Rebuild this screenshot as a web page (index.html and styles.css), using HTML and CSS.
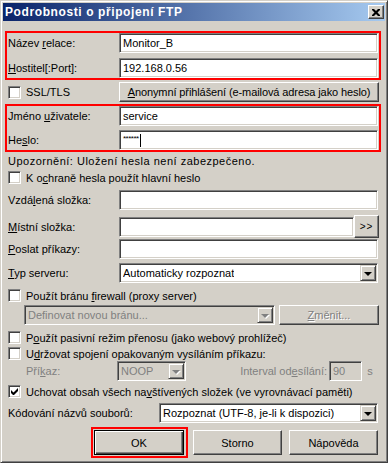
FILE: index.html
```html
<!DOCTYPE html>
<html>
<head>
  <meta charset="utf-8">
  <link rel="stylesheet" href="styles.css">
</head>
<body>

  <div class="window">
    <div class="titlebar">
      <span class="title">Podrobnosti o připojení FTP</span>
      <span class="close">
        <svg width="8" height="7" viewBox="0 0 8 7"><path d="M0 0h2l2 2 2-2h2v1l-2.5 2.5L8 6v1H6L4 5 2 7H0V6l2.5-2.5L0 1z" fill="#000"/></svg>
      </span>
    </div>

    <div class="content">

      <!-- session -->
      <div class="group group-session">
        <div class="row">
          <span class="lbl">Název <u>r</u>elace:</span>
          <div class="edit">Monitor_B</div>
        </div>
        <div class="row">
          <span class="lbl"><u>H</u>ostitel[:Port]:</span>
          <div class="edit">192.168.0.56</div>
        </div>
      </div>

      <div class="row row-ssl">
        <label class="check"><span class="box"></span><span>SSL/TLS</span></label>
        <div class="btn"><span><u>A</u>nonymní přihlášení (e-mailová adresa jako heslo)</span></div>
      </div>

      <!-- login -->
      <div class="group group-login">
        <div class="row">
          <span class="lbl">Jméno <u>u</u>živatele:</span>
          <div class="edit">service</div>
        </div>
        <div class="row">
          <span class="lbl">He<u>s</u>lo:</span>
          <div class="edit"><span class="stars">******</span><span class="caret"></span></div>
        </div>
      </div>

      <div class="note">Upozornění: Uložení hesla není zabezpečeno.</div>

      <label class="check line-master"><span class="box"></span><span>K o<u>c</u>hraně hesla použít hlavní heslo</span></label>

      <div class="row row-remote">
        <span class="lbl">Vzdá<u>l</u>ená složka:</span>
        <div class="edit"></div>
      </div>
      <div class="row row-local">
        <span class="lbl"><u>M</u>ístní složka:</span>
        <div class="local">
          <div class="edit"></div>
          <div class="btn btn-browse">&gt;&gt;</div>
        </div>
      </div>
      <div class="row row-cmd">
        <span class="lbl"><u>P</u>oslat příkazy:</span>
        <div class="edit"></div>
      </div>
      <div class="row row-type">
        <span class="lbl"><u>T</u>yp serveru:</span>
        <div class="edit combo">
          <span class="combo-text">Automaticky rozpoznat</span>
          <span class="drop"><span class="tri"></span></span>
        </div>
      </div>

      <label class="check line-firewall"><span class="box"></span><span>Použít bránu <u>f</u>irewall (proxy server)</span></label>
      <div class="proxy">
        <div class="edit combo disabled">
          <span class="combo-text">Definovat novou bránu...</span>
          <span class="drop"><span class="tri"></span></span>
        </div>
        <div class="btn disabled-btn"><span><u>Z</u>měnit...</span></div>
      </div>

      <label class="check line-passive"><span class="box"></span><span>P<u>o</u>užít pasivní režim přenosu (jako webový prohlížeč)</span></label>
      <label class="check line-keep"><span class="box"></span><span>U<u>d</u>ržovat spojení opakovaným vysíláním příkazu:</span></label>
      <div class="keepalive">
        <span class="dim lbl-cmd">Pří<u>k</u>az:</span>
        <div class="edit combo disabled noop">
          <span class="combo-text">NOOP</span>
          <span class="drop"><span class="tri"></span></span>
        </div>
        <span class="dim lbl-interval">Interval od<u>e</u>sílání:</span>
        <div class="edit disabled secs">90</div>
        <span class="dim lbl-s">s</span>
      </div>

      <label class="check line-cache"><span class="box checked"><svg width="7" height="7" viewBox="0 0 7 7"><path d="M0 2v3l2 2h1l4-4V0L2.5 4.5z" fill="#000"/></svg></span><span>Uchovat obsah všech na<u>v</u>štívených složek (ve vyrovnávací paměti)</span></label>

      <div class="encoding">
        <span class="enc-lbl">Kódování názvů souborů:</span>
        <div class="edit combo">
          <span class="combo-text">Rozpoznat (UTF-8, je-li k dispozici)</span>
          <span class="drop"><span class="tri"></span></span>
        </div>
      </div>

      <div class="buttons">
        <div class="ok-mark"><div class="btn btn-default">OK</div></div>
        <div class="btn btn-bottom">Storno</div>
        <div class="btn btn-bottom">Nápověda</div>
      </div>

    </div>
  </div>

</body>
</html>
```

FILE: styles.css
```css
* { box-sizing: border-box; }
body { margin: 0; background: #d4d0c8; font: 11px "Liberation Sans", Arial, sans-serif; color: #000; }
u { text-decoration: underline; text-underline-offset: 1px; }

.window { width: 388px; height: 463px; padding: 2px; background: #d4d0c8; border: 1px solid; border-color: #d4d0c8 #404040 #404040 #d4d0c8; box-shadow: inset 1px 1px #fff, inset -1px -1px #808080; }
.titlebar { height: 18px; display: flex; align-items: center; justify-content: space-between; padding: 0 1px 0 2px; background: linear-gradient(to right, #0a246a, #a6caf0); color: #fff; font-weight: bold; font-size: 12px; letter-spacing: 0.6px; }
.close { width: 16px; height: 14px; display: flex; align-items: center; justify-content: center; background: #d4d0c8; border: 1px solid; border-color: #fff #404040 #404040 #fff; box-shadow: inset -1px -1px #808080; }

.content { padding: 0 7px 0 5px; }

.row { display: grid; grid-template-columns: 111px 1fr; align-items: center; height: 20px; }
.group { border: 2px solid #f00; margin: 0 -3px; padding: 0 1px; }
.group .row + .row { margin-top: 5px; }
.group-session { margin-top: 10px; }
.group-login { margin-top: 2px; }
.group-login .row + .row { margin-top: 4px; }

.edit { height: 20px; background: #fff; border: 1px solid; border-color: #808080 #fff #fff #808080; box-shadow: inset 1px 1px #404040, inset -1px -1px #d4d0c8; padding: 0 3px; display: flex; align-items: center; white-space: nowrap; overflow: hidden; }
.btn { height: 20px; display: flex; align-items: center; justify-content: center; background: #d4d0c8; border: 1px solid; border-color: #fff #404040 #404040 #fff; box-shadow: inset -1px -1px #808080; white-space: nowrap; }

.check { display: flex; align-items: center; height: 13px; white-space: nowrap; }
.box { width: 13px; height: 13px; flex: none; margin-right: 5px; background: #fff; border: 1px solid; border-color: #808080 #fff #fff #808080; box-shadow: inset 1px 1px #404040, inset -1px -1px #d4d0c8; display: flex; align-items: center; justify-content: center; }

.row-ssl { margin-top: 2px; }
.row-ssl .btn { margin-right: -1px; letter-spacing: -0.1px; }

.stars { font-size: 8px; align-self: flex-start; margin-top: 3px; letter-spacing: -0.5px; }
.caret { width: 1px; height: 13px; background: #000; margin-left: 1px; }

.note { height: 13px; margin-top: 2px; display: flex; align-items: center; letter-spacing: 0.5px; }
.line-master { margin-top: 4px; }
.row-remote { margin-top: 6px; }
.row-local { margin-top: 5px; }
.row-cmd { margin-top: 4px; }
.row-type { margin-top: 4px; }

.local { display: flex; align-items: center; }
.local .edit { flex: 1; }
.btn-browse { width: 25px; height: 23px; margin-right: -1px; flex: none; font-size: 10px; letter-spacing: 1px; }

.combo { padding-right: 0; justify-content: space-between; }
.combo-text { overflow: hidden; }
.drop { width: 16px; height: 16px; flex: none; margin-right: 1px; display: flex; align-items: center; justify-content: center; background: #d4d0c8; border: 1px solid; border-color: #d4d0c8 #404040 #404040 #d4d0c8; box-shadow: inset 1px 1px #fff, inset -1px -1px #808080; }
.tri { width: 0; height: 0; border-left: 4px solid transparent; border-right: 4px solid transparent; border-top: 4px solid #000; margin-top: 1px; }

.line-firewall { margin-top: 6px; }
.proxy { display: flex; margin-top: 3px; margin-left: 16px; gap: 4px; }
.proxy .combo { width: 251px; }
.proxy .btn { flex: 1; margin-right: -1px; }

.disabled { background: #d4d0c8; color: #808080; }
.disabled .tri { border-top-color: #808080; filter: drop-shadow(1px 1px 0 #fff); }
.disabled-btn { color: #808080; text-shadow: 1px 1px #fff; }
.dim { color: #808080; }

.line-passive { margin-top: 6px; }
.line-keep { margin-top: 3px; }

.keepalive { display: flex; align-items: center; height: 20px; margin-top: 1px; }
.lbl-cmd { margin-left: 18px; width: 91px; }
.noop { width: 69px; }
.lbl-interval { margin-left: auto; margin-right: 2px; }
.secs { width: 33px; }
.lbl-s { width: 16px; text-align: center; }

.line-cache { margin-top: 4px; }
.box.checked svg { display: block; }

.encoding { display: flex; align-items: center; margin-top: 5px; }
.enc-lbl { width: 151px; flex: none; }
.encoding .combo { flex: 1; }

.buttons { display: flex; justify-content: flex-end; align-items: center; gap: 7px; margin-top: 4px; }
.ok-mark { border: 2px solid #f00; padding: 1px 2px 1px 1px; margin-right: -2px; }
.btn-default { width: 90px; height: 25px; border: 1px solid #000; box-shadow: inset 1px 1px #fff, inset -1px -1px #404040, inset -2px -2px #808080; }
.btn-bottom { width: 89px; height: 25px; }
```
